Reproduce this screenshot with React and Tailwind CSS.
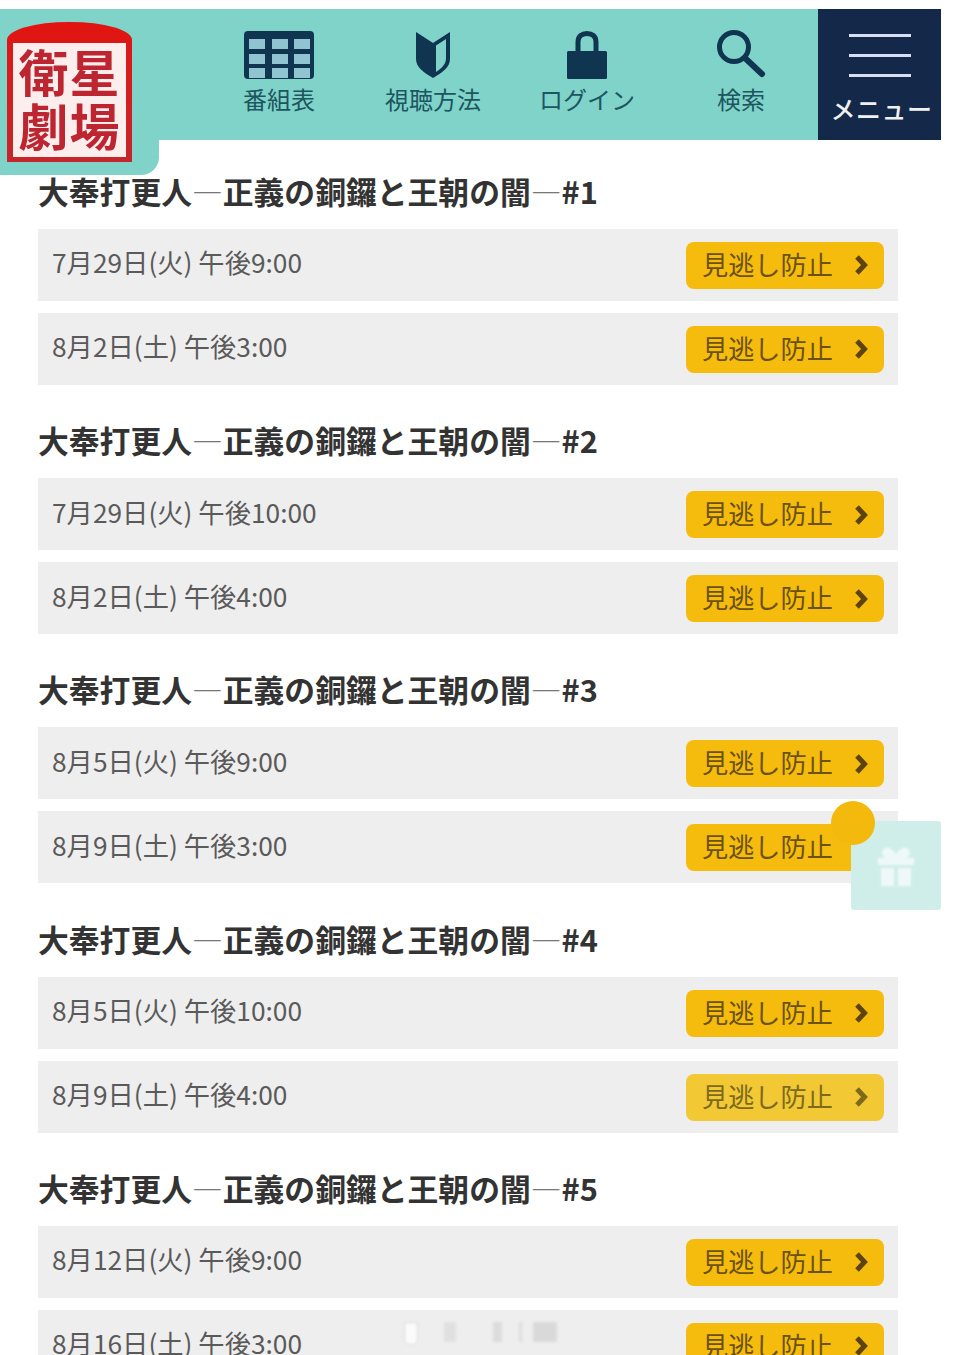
const FONT = '"Noto Sans CJK JP", "Noto Sans", sans-serif'

const episodes = [
  { no: 1, rows: ['7月29日(火) 午後9:00', '8月2日(土) 午後3:00'] },
  { no: 2, rows: ['7月29日(火) 午後10:00', '8月2日(土) 午後4:00'] },
  { no: 3, rows: ['8月5日(火) 午後9:00', '8月9日(土) 午後3:00'] },
  { no: 4, rows: ['8月5日(火) 午後10:00', '8月9日(土) 午後4:00'] },
  { no: 5, rows: ['8月12日(火) 午後9:00', '8月16日(土) 午後3:00'] },
]

function TableIcon() {
  const cols = [5, 28, 50]
  const rows = [8, 23, 37]
  return (
    <svg width="70" height="48" viewBox="0 0 70 48">
      <rect width="70" height="48" rx="4" fill="#0f3550" />
      {rows.map((y) =>
        cols.map((x) => <rect key={`${x}-${y}`} x={x} y={y} width="16" height="10" fill="#8fc4d0" />)
      )}
    </svg>
  )
}

function BeginnerIcon() {
  return (
    <svg width="36" height="48" viewBox="0 0 36 48">
      <path d="M1 1 L18 12 V47 C8 41 1 36 1 28 Z" fill="#0f3550" />
      <path d="M35 1 L18 12 V47 C28 41 35 36 35 28 Z" fill="#0f3550" />
      <path d="M31 8 L21 14.500 V41 C27 37 31 33 31 27 Z" fill="#7fd3c8" />
    </svg>
  )
}

function LockIcon() {
  return (
    <svg width="42" height="48" viewBox="0 0 42 48">
      <path d="M12 22 V11 C12 5 16 2.500 21 2.500 C26 2.500 30 5 30 11 V22" fill="none" stroke="#0f3550" strokeWidth="5" />
      <rect x="1" y="20" width="40" height="28" rx="1.500" fill="#0f3550" />
    </svg>
  )
}

function SearchIcon() {
  return (
    <svg width="50" height="50" viewBox="0 0 50 50">
      <circle cx="18" cy="18" r="14.500" fill="none" stroke="#0f3550" strokeWidth="5" />
      <path d="M29 29 L46 45" fill="none" stroke="#0f3550" strokeWidth="6" strokeLinecap="round" />
    </svg>
  )
}

function Chevron({ color }) {
  return (
    <svg width="14" height="22" viewBox="0 0 14 22">
      <path d="M3 3 L10.500 11 L3 19" fill="none" stroke={color} strokeWidth="5" />
    </svg>
  )
}

function GiftIcon() {
  return (
    <svg width="40" height="42" viewBox="0 0 40 42" fill="#eef9f7" className="blur-[1px]">
      <path d="M8 4 C12 0 18 5 20 10 C22 5 28 0 32 4 C36 8 33 12 29 13 H38 V20 H2 V13 H11 C7 12 4 8 8 4 Z" />
      <rect x="5" y="23" width="13" height="18" />
      <rect x="22" y="23" width="13" height="18" />
    </svg>
  )
}

function NavItem({ icon, label }) {
  return (
    <div className="flex w-[154px] shrink-0 flex-col items-center">
      <div className="flex h-[49px] items-end justify-center">{icon}</div>
      <div className="mt-[4px] text-[24px] leading-[32px] text-[#1d5560]">{label}</div>
    </div>
  )
}

function Logo() {
  return (
    <div className="absolute left-0 top-[9px] h-[166px] w-[159px] rounded-br-[18px] bg-[#7fd3c8]">
      <div className="ml-[7px] mt-[13px] h-[140px] w-[125px] rounded-t-[62px_18px] bg-linear-to-b from-[#e2130f] to-[#c4262b] px-[6px] pb-[5px] pt-[21px]">
        <div className="grid h-[114px] w-full grid-cols-[51px_51px] content-start justify-center bg-[#fdeeee] text-[50px] font-bold leading-[54px] text-[#bd2630]">
          <span>衛</span>
          <span>星</span>
          <span>劇</span>
          <span>場</span>
        </div>
      </div>
    </div>
  )
}

function Header() {
  return (
    <header className="flex h-[131px] w-[941px] bg-[#7fd3c8]">
      <div className="flex flex-1 pl-[202px] pt-[21px]">
        <NavItem icon={<TableIcon />} label="番組表" />
        <NavItem icon={<BeginnerIcon />} label="視聴方法" />
        <NavItem icon={<LockIcon />} label="ログイン" />
        <NavItem icon={<SearchIcon />} label="検索" />
      </div>
      <div className="flex w-[123px] flex-col items-center bg-[#14284a] pt-[25px]">
        <div className="flex w-[62px] flex-col gap-[17px]">
          <div className="h-[3px] bg-[#d7def2]" />
          <div className="h-[3px] bg-[#d7def2]" />
          <div className="h-[3px] bg-[#d7def2]" />
        </div>
        <div className="ml-[4px] mt-[13px] text-[25px] font-medium leading-[36px] tracking-[0.5px] text-[#f0f0f0]">メニュー</div>
      </div>
    </header>
  )
}

function ScheduleRow({ date, faded }) {
  return (
    <div className="flex h-[72px] items-center justify-between bg-[#eeeeee] px-[14px]">
      <div className="pb-[5px] text-[26.300px] leading-[36px] text-[#5a5a5a]">{date}</div>
      <button
        className={`mt-[1px] flex h-[47px] w-[198px] items-center justify-between rounded-[8px] px-[16px] ${
          faded ? 'bg-[#f2c935] text-[#7d6a1c]' : 'bg-[#f5bc0d] text-[#6b5112]'
        }`}
      >
        <span className="pb-[3px] text-[26.200px] leading-[36px]">見逃し防止</span>
        <Chevron color={faded ? '#7d6a1c' : '#5c4310'} />
      </button>
    </div>
  )
}

function Episode({ no, rows }) {
  return (
    <section className="flex flex-col">
      <h2 className="flex h-[93.250px] items-end pb-[16px] text-[30.800px] font-bold leading-[44px] text-[#333333]">
        <span>大奉打更人</span>
        <span className="font-light text-[#777777]">―</span>
        <span>正義の銅鑼と王朝の闇</span>
        <span className="font-light text-[#777777]">―</span>
        <span>#{no}</span>
      </h2>
      <div className="flex flex-col gap-[12px]">
        {rows.map((date) => (
          <ScheduleRow key={date} date={date} faded={date === '8月9日(土) 午後4:00'} />
        ))}
      </div>
    </section>
  )
}

export default function App() {
  return (
    <div className="relative h-[1355px] w-[960px] overflow-hidden bg-white pt-[9px]" style={{ fontFamily: FONT }}>
      <Header />
      <Logo />
      <main className="ml-[38px] mt-[-4.300px] w-[860px]">
        {episodes.map((ep) => (
          <Episode key={ep.no} no={ep.no} rows={ep.rows} />
        ))}
      </main>

      {/* floating gift button */}
      <div className="absolute left-[851px] top-[821px] flex h-[89px] w-[90px] items-center justify-center rounded-[3px] bg-[#cfeeea]">
        <GiftIcon />
      </div>
      <div className="absolute left-[831px] top-[801px] h-[44px] w-[44px] rounded-full bg-[#f3b90c]" />

      {/* blurred watermark at the bottom */}
      <div className="absolute left-[404px] top-[1322px] flex h-[23px] items-start opacity-80 blur-[1.500px]">
        <div className="h-[23px] w-[14px] rounded-b-[5px] border border-[#d0d0d0] bg-white" />
        <div className="ml-[26px] h-[20px] w-[12px] bg-[#dddddd]" />
        <div className="ml-[37px] h-[20px] w-[9px] bg-[#d8d8d8]" />
        <div className="ml-[17px] h-[20px] w-[3px] bg-[#d8d8d8]" />
        <div className="ml-[11px] h-[20px] w-[24px] bg-[#d4d4d4]" />
      </div>
    </div>
  )
}
